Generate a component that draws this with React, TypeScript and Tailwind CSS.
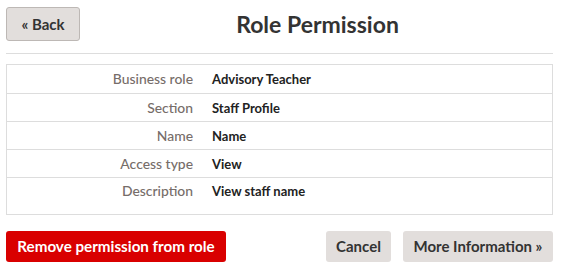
import React from "react";

const rows: [string, string, boolean][] = [
  ["Business role", "Advisory Teacher", false],
  ["Section", "Staff Profile", false],
  ["Name", "Name", false],
  ["Access type", "View", false],
  ["Description", "View staff name", true],
];

export default function App() {
  return (
    <div className="w-[566px] h-[269px] bg-white font-['Lato',sans-serif] text-[#333] px-[6px] pt-[7px] box-border">
      <div className="w-[547px]">
        <div className="flex items-center h-[34px]">
          <button className="h-[34px] w-[74px] border border-[#bdb8b5] bg-[#e2dedc] rounded-[3px] text-[15px] font-bold text-[#333] flex items-center justify-center">
            « Back
          </button>
          <h1 className="flex-1 text-center text-[23px] font-bold text-[#333] leading-none pl-[2px]">
            Role Permission
          </h1>
        </div>
        <div className="mt-[12px] border-t border-[#dddddd]" />
        <div className="mt-[10px] border border-[#dddddd]">
          {rows.map(([label, value, last], i) => (
            <div
              key={label}
              className={`flex text-[13px] leading-[20px] ${last ? "h-[37px] items-start pt-[3px]" : "h-[28px] items-center"} ${i > 0 ? "border-t border-[#dddddd]" : ""}`}
            >
              <div className="w-[186px] text-right text-[#766d69] font-medium text-[13.9px]">{label}</div>
              <div className="pl-[19px] font-bold text-[#222]">{value}</div>
            </div>
          ))}
        </div>
        <div className="mt-[16px] flex items-center">
          <button className="h-[31px] w-[220px] bg-[#d90000] rounded-[3px] text-white text-[15.2px] font-bold">
            Remove permission from role
          </button>
          <div className="flex-1" />
          <button className="h-[31px] w-[65px] bg-[#e2dedc] rounded-[3px] text-[#333] text-[15px] font-bold">
            Cancel
          </button>
          <button className="ml-[12px] h-[31px] w-[150px] bg-[#e2dedc] rounded-[3px] text-[#333] text-[15px] font-bold">
            More Information »
          </button>
        </div>
      </div>
    </div>
  );
}
